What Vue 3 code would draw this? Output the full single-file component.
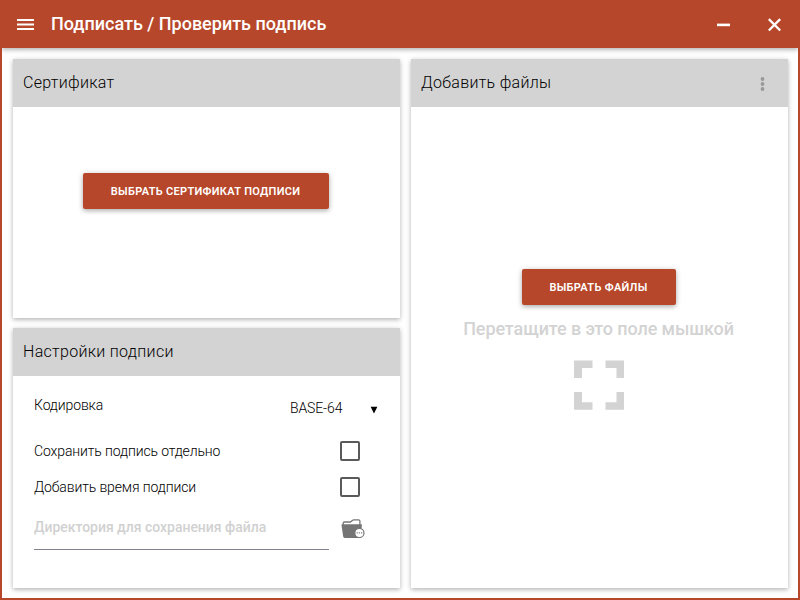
<script setup>
import { ref } from 'vue'

const encoding = ref('BASE-64')
const options = ref([
  { label: 'Сохранить подпись отдельно', checked: false },
  { label: 'Добавить время подписи', checked: false },
])
</script>

<template>
  <div class="window">
    <header class="bar">
      <svg class="menu" width="18" height="12" viewBox="0 0 18 12">
        <path d="M0 0h17v2H0zM0 4.5h17v2H0zM0 9h17v2H0z" fill="#fff" />
      </svg>
      <h1 class="title">Подписать / Проверить подпись</h1>
      <svg class="minimize" width="13" height="14" viewBox="0 0 13 14">
        <path d="M0 5.6h13v2.6H0z" fill="#fff" />
      </svg>
      <svg class="close" width="13" height="14" viewBox="0 0 13 14">
        <path d="M.8 1.1l11.4 11.4M12.2 1.1l-11.4 11.4" stroke="#fff" stroke-width="2.3" />
      </svg>
    </header>

    <main class="content">
      <div class="left">
        <section class="card certificate">
          <div class="card-head"><span class="heading">Сертификат</span></div>
          <div class="cert-body">
            <button class="btn wide">ВЫБРАТЬ СЕРТИФИКАТ ПОДПИСИ</button>
          </div>
        </section>

        <section class="card settings">
          <div class="card-head"><span class="heading">Настройки подписи</span></div>
          <div class="settings-body">
            <div class="encoding">
              <span class="label">Кодировка</span>
              <span class="value">{{ encoding }}</span>
              <svg class="arrow" width="8" height="8" viewBox="0 0 8 8">
                <path d="M0.6 0.8h6.8L4 7.4z" fill="#000" />
              </svg>
            </div>
            <div v-for="o in options" :key="o.label" class="option">
              <span class="label">{{ o.label }}</span>
              <span class="box"></span>
            </div>
            <div class="directory">
              <div class="field">Директория для сохранения файла</div>
              <svg class="folder" width="24" height="20" viewBox="0 0 24 20">
                <path d="M2.2 6V4.2Q2.2 3 3.4 3H9.4L11.6 1.2Q12 .8 12.8 .8H17.6Q18.9 .8 18.9 2V6" fill="none" stroke="#757575" stroke-width="1.3" />
                <path d="M1 5.3H20.4Q21 5.3 20.9 6L20 17.6Q19.9 19 18.5 19H3.8Q2.3 19 2.2 17.6L.5 6Q.4 5.3 1 5.3z" fill="#757575" />
                <circle cx="18.4" cy="13.9" r="4.6" fill="#fff" stroke="#757575" stroke-width="1.2" />
                <path d="M15.6 13.2h1.3v1.3h-1.3zM17.8 13.2h1.3v1.3h-1.3zM20 13.2h1.3v1.3H20z" fill="#858585" />
              </svg>
            </div>
          </div>
        </section>
      </div>

      <section class="card files">
        <div class="card-head">
          <span class="heading">Добавить файлы</span>
          <svg class="more" width="5" height="14" viewBox="0 0 5 14">
            <g fill="#999">
              <circle cx="2.5" cy="2" r="1.9" />
              <circle cx="2.5" cy="7" r="1.9" />
              <circle cx="2.5" cy="12" r="1.9" />
            </g>
          </svg>
        </div>
        <div class="drop">
          <button class="btn">ВЫБРАТЬ ФАЙЛЫ</button>
          <p class="hint">Перетащите в это поле мышкой</p>
          <svg class="target" width="50" height="50" viewBox="0 0 50 50">
            <path d="M0 .5h18.5V8H8v10H0zM31.5 .5H50V18h-7.5V8h-11zM0 32h8v10.2h10.5v7.5H0zM42.5 32H50v17.7H31.5v-7.5h11z" fill="#d3d3d3" />
          </svg>
        </div>
      </section>
    </main>
  </div>
</template>

<style>
body {
  margin: 0;
  background: #fff;
}
</style>

<style scoped>
.window {
  box-sizing: border-box;
  width: 800px;
  height: 600px;
  display: flex;
  flex-direction: column;
  border: 2px solid #b7472a;
  border-top: 0;
  background: #fff;
  font-family: Roboto, "Liberation Sans", sans-serif;
  overflow: hidden;
}
.bar {
  display: flex;
  align-items: center;
  flex: none;
  height: 48px;
  box-sizing: border-box;
  padding: 0 17px 0 15px;
  background: #b7472a;
  box-shadow: 0 2px 4px 0 rgba(0, 0, 0, 0.16), 0 1px 6px 0 rgba(0, 0, 0, 0.18);
}
.menu {
  margin-top: 2px;
}
.title {
  flex: 1;
  margin: 0 0 0 16px;
  color: #fff;
  font-size: 18px;
  font-weight: 500;
  line-height: 24px;
  white-space: nowrap;
}
.close {
  margin-left: 38px;
}
.minimize,
.close {
  margin-top: 1px;
}
.content {
  flex: 1;
  display: flex;
  gap: 11px;
  padding: 11px 10px 10px 11px;
}
.left {
  width: 387px;
  display: flex;
  flex-direction: column;
  gap: 10px;
}
.card {
  display: flex;
  flex-direction: column;
  background: #fff;
  box-shadow: 0 2px 4px 0 rgba(0, 0, 0, 0.16), 0 1px 6px 0 rgba(0, 0, 0, 0.16);
}
.certificate {
  height: 259px;
}
.settings,
.files {
  flex: 1;
}
.card-head {
  flex: none;
  display: flex;
  align-items: center;
  justify-content: space-between;
  height: 48px;
  box-sizing: border-box;
  padding: 0 23px 0 10px;
  background: #d3d3d3;
  color: #000;
  font-size: 16px;
  font-weight: 350;
  letter-spacing: 0.3px;
}
.heading {
  margin-bottom: 2px;
}
.more {
  margin-top: 2px;
}
.cert-body {
  display: flex;
  justify-content: center;
  padding: 66px 2px 0 0;
}
.btn {
  height: 36px;
  width: 154px;
  padding: 0;
  border: 0;
  border-radius: 2px;
  background: #b7472a;
  color: #fff;
  font-family: inherit;
  font-size: 11px;
  font-weight: 600;
  letter-spacing: 0.32px;
  white-space: nowrap;
  box-shadow: 0 2px 4px 0 rgba(0, 0, 0, 0.18), 0 1px 6px 0 rgba(0, 0, 0, 0.18);
}
.btn.wide {
  width: 246px;
}
.settings-body {
  padding: 14px 21px 0;
  font-size: 14px;
  font-weight: 300;
  color: #000;
}
.label {
  letter-spacing: -0.12px;
}
.encoding {
  display: flex;
  align-items: center;
  height: 43px;
}
.encoding .label {
  flex: 1;
  margin-bottom: 14px;
}
.encoding .value {
  width: 80px;
  margin-bottom: 8px;
  letter-spacing: -0.12px;
}
.arrow {
  margin: 0 1px 4px 0;
}
.option {
  display: flex;
  align-items: center;
  justify-content: space-between;
  height: 36px;
  padding-right: 19px;
}
.box {
  box-sizing: border-box;
  width: 20px;
  height: 20px;
  border: 2px solid #5a5a5a;
  border-radius: 2px;
}
.directory {
  display: flex;
  align-items: flex-start;
  gap: 12px;
}
.field {
  box-sizing: border-box;
  width: 295px;
  height: 45px;
  padding-top: 12px;
  border-bottom: 1px solid #83838f;
  color: #d1d1d1;
  font-weight: 500;
  letter-spacing: -0.02px;
  line-height: 20px;
}
.folder {
  margin-top: 14px;
}
.drop {
  display: flex;
  flex-direction: column;
  align-items: center;
  padding: 162px 2px 0 0;
}
.hint {
  margin: 12px 0 0;
  color: #d3d3d3;
  font-size: 18px;
  font-weight: 500;
  letter-spacing: -0.1px;
  line-height: 24px;
  white-space: nowrap;
}
.target {
  margin-top: 19px;
}
</style>
